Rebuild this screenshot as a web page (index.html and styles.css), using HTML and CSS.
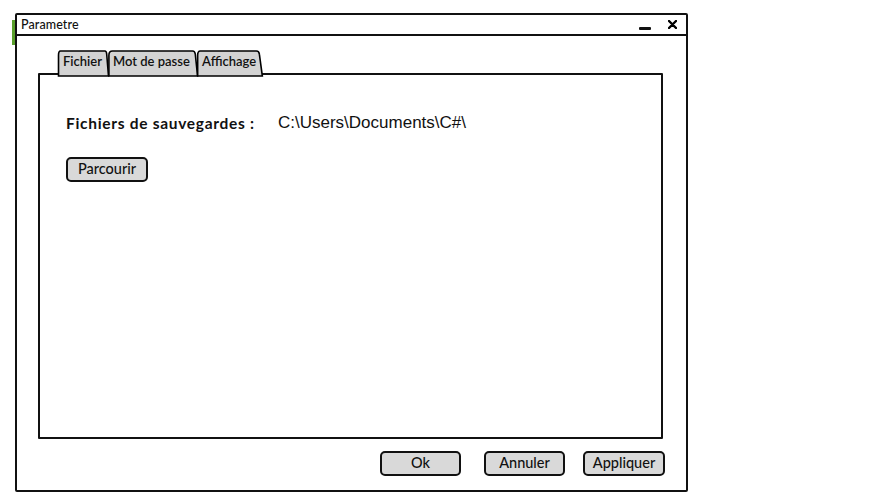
FILE: index.html
```html
<!DOCTYPE html>
<html lang="fr">
<head>
<meta charset="utf-8">
<title>Parametre</title>
<link rel="stylesheet" href="styles.css">
</head>
<body>
<div class="mark"></div>
<div class="window">
  <div class="titlebar">
    <span class="title">Parametre</span>
    <span class="controls">
      <span class="min"></span>
      <svg class="close" width="9" height="9" viewBox="0 0 9 9"><path d="M1 1 L8 8 M8 1 L1 8" stroke="#000" stroke-width="2.4" stroke-linecap="round"/></svg>
    </span>
  </div>
  <div class="body">
    <div class="tabs">
      <div class="tab"><svg class="tabshape" viewBox="0 0 100 24" preserveAspectRatio="none"><path d="M1 25 L1 5 Q1 1 5 1 L92 1 Q95 1 95.5 4 L99 25 Z" fill="#d3d3d3" stroke="#000" stroke-width="1.6" vector-effect="non-scaling-stroke"/></svg><span class="tablabel">Fichier</span></div>
      <div class="tab"><svg class="tabshape" viewBox="0 0 100 24" preserveAspectRatio="none"><path d="M1 25 L1 5 Q1 1 5 1 L94 1 Q96.5 1 97 4 L99.5 25 Z" fill="#d3d3d3" stroke="#000" stroke-width="1.6" vector-effect="non-scaling-stroke"/></svg><span class="tablabel">Mot de passe</span></div>
      <div class="tab"><svg class="tabshape" viewBox="0 0 100 24" preserveAspectRatio="none"><path d="M1 25 L1 5 Q1 1 5 1 L90 1 Q94 1 94.5 4 L99 25 Z" fill="#d3d3d3" stroke="#000" stroke-width="1.6" vector-effect="non-scaling-stroke"/></svg><span class="tablabel">Affichage</span></div>
    </div>
    <div class="panel">
      <div class="row">
        <span class="label">Fichiers de sauvegardes :</span>
        <span class="path">C:\Users\Documents\C#\</span>
      </div>
      <button class="btn browse">Parcourir</button>
    </div>
    <div class="actions">
      <button class="btn ok">Ok</button>
      <button class="btn cancel">Annuler</button>
      <button class="btn apply">Appliquer</button>
    </div>
  </div>
</div>
</body>
</html>
```

FILE: styles.css
```css
* { box-sizing: border-box; }
html, body { margin: 0; padding: 0; background: #fff; }
body {
  width: 896px;
  height: 501px;
  overflow: hidden;
  position: relative;
  font-family: Lato, "Noto Sans", sans-serif;
  color: #111;
}
.mark {
  position: absolute;
  left: 12px;
  top: 20px;
  width: 3px;
  height: 25px;
  background: #5aa02c;
}
.window {
  margin: 13px 0 0 15px;
  width: 673px;
  height: 479px;
  border: 2px solid #111;
  border-radius: 2px;
  display: flex;
  flex-direction: column;
  position: relative;
  background: #fff;
}
.titlebar {
  height: 21px;
  border-bottom: 2px solid #111;
  display: flex;
  align-items: center;
  justify-content: space-between;
  padding: 0 9px 0 4px;
}
.title {
  font-size: 12.5px;
  font-weight: 500;
  letter-spacing: 0.1px;
}
.controls {
  display: flex;
  align-items: center;
  gap: 17px;
}
.min {
  width: 12px;
  height: 3px;
  background: #111;
  border-radius: 1px;
  margin-top: 7px;
}
.close { display: block; margin-bottom: 1px; }
.body {
  flex: 1;
  display: flex;
  flex-direction: column;
  padding: 14px 23px 0 21px;
}
.tabs {
  display: flex;
  padding-left: 20px;
  height: 25px;
  margin-bottom: -2px;
  position: relative;
  z-index: 1;
}
.tab {
  position: relative;
  height: 25px;
  display: flex;
  align-items: center;
  margin-right: -1px;
}
.tab:nth-child(1) { width: 51px; }
.tab:nth-child(2) { width: 90px; }
.tab:nth-child(3) { width: 66px; }
.tabshape {
  position: absolute;
  left: 0;
  top: 0;
  width: 100%;
  height: 100%;
  overflow: visible;
}
.tablabel {
  position: relative;
  font-size: 13px;
  font-weight: 600;
  padding-left: 5px;
  padding-bottom: 4px;
}
.panel {
  height: 366px;
  border: 2px solid #111;
  border-radius: 1px;
  padding: 36px 0 0 26px;
  position: relative;
  z-index: 0;
  background: #fff;
}
.row {
  display: flex;
  align-items: center;
  height: 24px;
}
.label {
  font-size: 15.5px;
  font-weight: 700;
  letter-spacing: 0.7px;
  width: 212px;
}
.path {
  font-family: "Liberation Sans", Arial, sans-serif;
  font-size: 17px;
}
.btn {
  font-family: Lato, "Noto Sans", sans-serif;
  font-size: 14.5px;
  font-weight: 500;
  color: #111;
  background: #d9d9d9;
  border: 2px solid #111;
  border-radius: 5px;
  height: 25px;
  padding: 0 0 2px;
  display: flex;
  align-items: center;
  justify-content: center;
}
.browse {
  width: 82px;
  height: 25px;
  margin-top: 22px;
}
.actions {
  display: flex;
  justify-content: flex-end;
  margin-top: 12px;
  margin-right: -2px;
}
.ok { width: 81px; }
.cancel { width: 81px; margin-left: 23px; }
.apply { width: 82px; margin-left: 18px; }
```
